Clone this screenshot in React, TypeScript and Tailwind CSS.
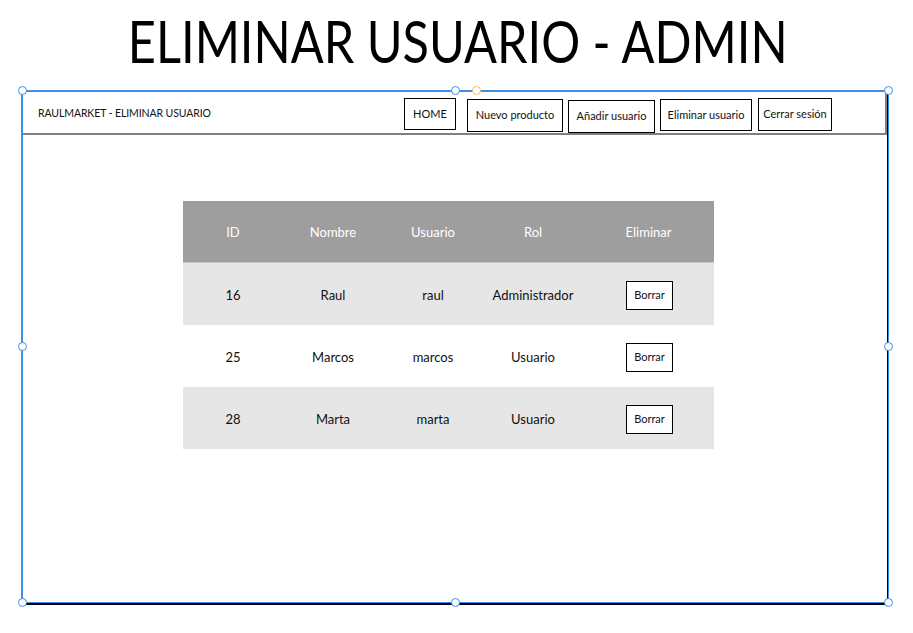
import React from 'react'

const font = { fontFamily: 'Lato, "Noto Sans", sans-serif' }

const navButtons = [
  { label: 'HOME', cls: 'w-[52px] h-[32px] mt-[6px]' },
  { label: 'Nuevo producto', cls: 'w-[96px] h-[33px] mt-[7px] ml-[11px]' },
  { label: 'Añadir usuario', cls: 'w-[87px] h-[33px] mt-[8px] ml-[5px]' },
  { label: 'Eliminar usuario', cls: 'w-[92px] h-[32px] mt-[7px] ml-[5px]' },
  { label: 'Cerrar sesión', cls: 'w-[74px] h-[33px] mt-[6px] ml-[6px]' },
]

const users = [
  { id: 16, nombre: 'Raul', usuario: 'raul', rol: 'Administrador' },
  { id: 25, nombre: 'Marcos', usuario: 'marcos', rol: 'Usuario' },
  { id: 28, nombre: 'Marta', usuario: 'marta', rol: 'Usuario' },
]

function Handle({ className, color = 'border-[#3d8fe6]' }: { className: string; color?: string }) {
  return <span className={`absolute size-[9px] rounded-full border-[1.5px] ${color} bg-white ${className}`} />
}

export default function App() {
  return (
    <div className="w-[913px] h-[633px] bg-white text-black overflow-hidden" style={font}>
      <h1 className="h-[90px] pt-[6px] text-center text-[58px] leading-[70px]">
        <span className="inline-block scale-x-[0.84] translate-x-[1px]">ELIMINAR USUARIO - ADMIN</span>
      </h1>

      <div className="relative ml-[21px] w-[868px] h-[515px] border-r-2 border-b-2 border-black border-l border-l-[#888]">
        {/* navbar */}
        <div className="flex h-[45px] border-2 border-[#808080] border-l-2 -ml-px">
          <div className="w-[381px] pl-[15px] pt-[14px] text-[10.5px] tracking-[-0.1px] text-[#111]">RAULMARKET - ELIMINAR USUARIO</div>
          <div className="flex items-start">
            {navButtons.map((b) => (
              <div
                key={b.label}
                className={`flex items-center justify-center border border-black text-[11px] text-[#111] ${b.cls}`}
              >
                {b.label}
              </div>
            ))}
          </div>
        </div>

        {/* table */}
        <div className="ml-[161px] mt-[66px] w-[531px] text-[13px]">
          <div className="grid grid-cols-[100px_100px_100px_100px_131px] h-[62px] pt-[2px] items-center bg-[#9e9e9e] text-white text-center border-b border-[#c8c8c8]">
            <div>ID</div>
            <div>Nombre</div>
            <div>Usuario</div>
            <div>Rol</div>
            <div>Eliminar</div>
          </div>
          {users.map((u, i) => (
            <div
              key={u.id}
              className={`grid grid-cols-[100px_100px_100px_100px_131px] h-[62px] pt-[3px] items-center text-center text-[#111] ${
                i % 2 === 0 ? 'bg-[#e6e6e6]' : 'bg-white'
              }`}
            >
              <div>{u.id}</div>
              <div>{u.nombre}</div>
              <div>{u.usuario}</div>
              <div>{u.rol}</div>
              <div className="flex justify-center pl-[2px]">
                <div className="flex w-[47px] h-[29px] items-center justify-center border border-black bg-white text-[11px]">
                  Borrar
                </div>
              </div>
            </div>
          ))}
        </div>

        {/* selection overlay */}
        <div className="pointer-events-none absolute left-0 top-0 w-[867px] h-[513px] border border-[#3d8fe6]" />
        <Handle className="-left-[4px] -top-[4px]" />
        <Handle className="left-[429px] -top-[4px]" />
        <Handle className="left-[450px] -top-[4px]" color="border-[#f5c04a]" />
        <Handle className="left-[862px] -top-[4px]" />
        <Handle className="-left-[4px] top-[252px]" />
        <Handle className="left-[862px] top-[252px]" />
        <Handle className="-left-[4px] top-[508px]" />
        <Handle className="left-[429px] top-[508px]" />
        <Handle className="left-[862px] top-[508px]" />
      </div>
    </div>
  )
}
